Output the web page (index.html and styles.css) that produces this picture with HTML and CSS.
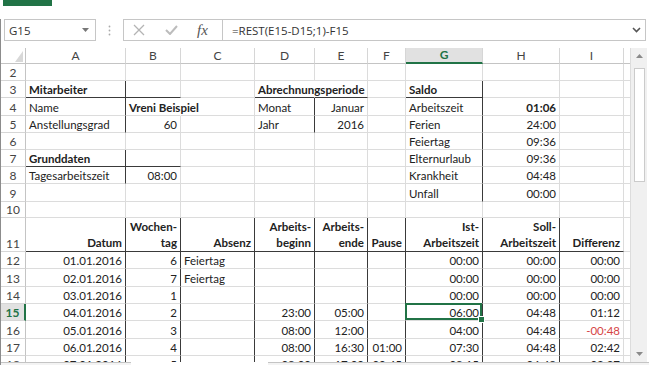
FILE: index.html
```html
<!DOCTYPE html>
<html lang="de">
<head>
  <meta charset="UTF-8">
  <meta name="viewport" content="width=device-width, initial-scale=1.0">
  <title>Arbeitszeit Januar</title>
  <link rel="stylesheet" href="styles.css">
</head>
<body>
  <div class="tab-strip"><span class="file-tab"></span></div>

  <div class="window">
    <!-- formula bar -->
    <div class="formula-bar">
      <div class="name-box">
        <span>G15</span>
        <svg width="7" height="4" viewBox="0 0 7 4"><polygon points="0,0 7,0 3.5,4" fill="#777"/></svg>
      </div>
      <div class="grip">
        <svg width="3" height="11" viewBox="0 0 3 11"><circle cx="1.5" cy="1.5" r="0.9" fill="#aaa"/><circle cx="1.5" cy="5.5" r="0.9" fill="#aaa"/><circle cx="1.5" cy="9.5" r="0.9" fill="#aaa"/></svg>
      </div>
      <div class="fx-buttons">
        <svg class="btn-x" width="12" height="12" viewBox="0 0 12 12"><path d="M1 1 L11 11 M11 1 L1 11" stroke="#b4b4b4" stroke-width="1.3" fill="none"/></svg>
        <svg class="btn-ok" width="13" height="10" viewBox="0 0 13 10"><polyline points="1,5 5,9 12,1" stroke="#bcbcbc" stroke-width="2" fill="none"/></svg>
        <span class="fx">fx</span>
      </div>
      <div class="formula-input">
        <span>=REST(E15-D15;1)-F15</span>
        <svg width="9" height="6" viewBox="0 0 9 6"><polyline points="1,1 4.5,4.5 8,1" stroke="#555" stroke-width="1.6" fill="none"/></svg>
      </div>
    </div>

    <!-- sheet -->
    <div class="sheet-area">
      <div class="grid-wrap">
        <table class="sheet">
          <colgroup>
            <col class="w-rh"><col class="w-a"><col class="w-b"><col class="w-c"><col class="w-d">
            <col class="w-e"><col class="w-f"><col class="w-g"><col class="w-h"><col class="w-i"><col class="w-fill">
          </colgroup>
          <thead>
            <tr class="h16">
              <th class="corner"><svg width="25" height="15" viewBox="0 0 25 15"><polygon points="14,14 22,14 22,3" fill="#d8d8d8"/></svg></th>
              <th>A</th><th>B</th><th>C</th><th>D</th><th>E</th><th>F</th><th class="sel">G</th><th>H</th><th>I</th><th class="fill"></th>
            </tr>
          </thead>
          <tbody>
            <tr class="h17"><th>2</th><td></td><td></td><td></td><td></td><td></td><td></td><td></td><td></td><td></td><td class="fill"></td></tr>
            <tr class="h17"><th>3</th><td class="b bb br">Mitarbeiter</td><td class="bb"></td><td></td><td class="b bb nob">Abrechnungsperiode</td><td class="bb"></td><td></td><td class="b bb br">Saldo</td><td></td><td></td><td class="fill"></td></tr>
            <tr class="h18"><th>4</th><td class="br">Name</td><td class="b nob">Vreni Beispiel</td><td></td><td class="br">Monat</td><td class="n">Januar</td><td></td><td class="br">Arbeitszeit</td><td class="n b">01:06</td><td></td><td class="fill"></td></tr>
            <tr class="h17"><th>5</th><td class="br">Anstellungsgrad</td><td class="n">60</td><td></td><td class="br">Jahr</td><td class="n">2016</td><td></td><td class="br">Ferien</td><td class="n">24:00</td><td></td><td class="fill"></td></tr>
            <tr class="h17"><th>6</th><td></td><td></td><td></td><td></td><td></td><td></td><td class="br">Feiertag</td><td class="n">09:36</td><td></td><td class="fill"></td></tr>
            <tr class="h17"><th>7</th><td class="b bb br">Grunddaten</td><td class="bb"></td><td></td><td></td><td></td><td></td><td class="br">Elternurlaub</td><td class="n">09:36</td><td></td><td class="fill"></td></tr>
            <tr class="h17"><th>8</th><td class="br">Tagesarbeitszeit</td><td class="n">08:00</td><td></td><td></td><td></td><td></td><td class="br">Krankheit</td><td class="n">04:48</td><td></td><td class="fill"></td></tr>
            <tr class="h18"><th>9</th><td></td><td></td><td></td><td></td><td></td><td></td><td class="br">Unfall</td><td class="n">00:00</td><td></td><td class="fill"></td></tr>
            <tr class="h16"><th>10</th><td></td><td></td><td></td><td></td><td></td><td></td><td></td><td></td><td></td><td class="fill"></td></tr>
            <tr class="h34 tbl head">
              <th>11</th>
              <td>Datum</td><td>Wochen-<br>tag</td><td>Absenz</td><td>Arbeits-<br>beginn</td><td>Arbeits-<br>ende</td>
              <td>Pause</td><td>Ist-<br>Arbeitszeit</td><td>Soll-<br>Arbeitszeit</td><td class="last">Differenz</td><td class="fill"></td>
            </tr>
            <tr class="h17 tbl"><th>12</th><td>01.01.2016</td><td>6</td><td class="left">Feiertag</td><td></td><td></td><td></td><td>00:00</td><td>00:00</td><td class="last">00:00</td><td class="fill"></td></tr>
            <tr class="h18 tbl"><th>13</th><td>02.01.2016</td><td>7</td><td class="left">Feiertag</td><td></td><td></td><td></td><td>00:00</td><td>00:00</td><td class="last">00:00</td><td class="fill"></td></tr>
            <tr class="h17 tbl"><th>14</th><td>03.01.2016</td><td>1</td><td></td><td></td><td></td><td></td><td>00:00</td><td>00:00</td><td class="last">00:00</td><td class="fill"></td></tr>
            <tr class="h17 tbl"><th class="sel">15</th><td>04.01.2016</td><td>2</td><td></td><td>23:00</td><td>05:00</td><td></td><td class="active">06:00</td><td>04:48</td><td class="last">01:12</td><td class="fill"></td></tr>
            <tr class="h18 tbl"><th>16</th><td>05.01.2016</td><td>3</td><td></td><td>08:00</td><td>12:00</td><td></td><td>04:00</td><td>04:48</td><td class="last neg">-00:48</td><td class="fill"></td></tr>
            <tr class="h17 tbl"><th>17</th><td>06.01.2016</td><td>4</td><td></td><td>08:00</td><td>16:30</td><td>01:00</td><td>07:30</td><td>04:48</td><td class="last">02:42</td><td class="fill"></td></tr>
            <tr class="h17 tbl"><th>18</th><td>07.01.2016</td><td>5</td><td></td><td>08:00</td><td>17:00</td><td>00:45</td><td>08:15</td><td>04:48</td><td class="last">03:27</td><td class="fill"></td></tr>
          </tbody>
        </table>
      </div>

      <div class="vscroll">
        <div class="arrow"><svg width="7" height="4" viewBox="0 0 7 4"><polygon points="0,4 7,4 3.5,0" fill="#8a8a8a"/></svg></div>
        <div class="thumb"></div>
        <div class="track"></div>
        <div class="arrow"><svg width="7" height="4" viewBox="0 0 7 4"><polygon points="0,0 7,0 3.5,4" fill="#8a8a8a"/></svg></div>
      </div>
    </div>

    <div class="sheet-tabs">
      <span class="seg"></span><span class="gap"></span><span class="seg rest"></span>
    </div>
  </div>
</body>
</html>
```

FILE: styles.css
```css
/* page */
body {
  margin: 0;
  width: 649px;
  height: 365px;
  overflow: hidden;
  background: #ffffff;
  font-family: Lato, "Liberation Sans", sans-serif;
}
.tab-strip {
  height: 6px;
}
.file-tab {
  display: block;
  width: 49px;
  height: 6px;
  margin-left: 3px;
  background: #217346;
}
.window {
  border-left: 1px solid #8c8c8c;
}

/* formula bar */
.formula-bar {
  display: flex;
  height: 22px;
  margin-top: 13px;
  padding: 0 3px 0 3px;
  font-family: "Open Sans", "Liberation Sans", sans-serif;
  font-size: 11.5px;
  color: #333;
}
.name-box {
  width: 92px;
  box-sizing: border-box;
  border: 1px solid #c6c6c6;
  display: flex;
  align-items: center;
  justify-content: space-between;
  padding: 0 6px 0 4px;
}
.grip {
  width: 27px;
  display: flex;
  align-items: center;
  justify-content: center;
}
.fx-buttons {
  width: 99px;
  box-sizing: border-box;
  border: 1px solid #c6c6c6;
  border-right: none;
  display: flex;
  align-items: center;
  padding-left: 9px;
}
.btn-ok {
  margin-left: 20px;
}
.fx {
  margin-left: 19px;
  font-family: "Liberation Serif", serif;
  font-style: italic;
  font-size: 15px;
  color: #555;
}
.formula-input {
  flex: 1;
  border: 1px solid #c6c6c6;
  display: flex;
  align-items: center;
  justify-content: space-between;
  padding: 0 4px 0 9px;
}

/* sheet */
.sheet-area {
  display: flex;
  height: 314px;
  margin-top: 7px;
}
.grid-wrap {
  width: 629px;
  overflow: hidden;
}
.sheet {
  border-spacing: 0;
  table-layout: fixed;
  width: 629px;
  font-size: 11.5px;
  line-height: 14px;
}
.w-rh { width: 25px; }
.w-a { width: 100px; }
.w-b { width: 55px; }
.w-c { width: 74px; }
.w-d { width: 60px; }
.w-e { width: 53px; }
.w-f { width: 38px; }
.w-g { width: 77px; }
.w-h { width: 77px; }
.w-i { width: 64px; }
.w-fill { width: 6px; }

.h16 { height: 16px; }
.h17 { height: 17px; }
.h18 { height: 18px; }
.h34 { height: 34px; }

.sheet th {
  padding: 0;
  font-weight: normal;
  color: #444;
  text-align: center;
  border-right: 1px solid #d6d6d6;
  border-bottom: 1px solid #d6d6d6;
  font-size: 12px;
}
.sheet thead th {
  vertical-align: middle;
  border-bottom-color: #c4c4c4;
}
.sheet thead th.corner {
  border-right-color: #c4c4c4;
}
.corner svg {
  display: block;
}
.sheet thead th.sel {
  background: #e1e1e1;
  color: #217346;
  font-weight: bold;
  border-bottom: 2px solid #217346;
}
.sheet tbody th {
  vertical-align: bottom;
  border-right-color: #c4c4c4;
}
.sheet tbody th.sel {
  background: #e1e1e1;
  color: #217346;
  font-weight: bold;
  border-right: 2px solid #217346;
}
.sheet td {
  padding: 0 3px;
  border-right: 1px solid #dcdcdc;
  border-bottom: 1px solid #dcdcdc;
  white-space: nowrap;
  overflow: visible;
  vertical-align: bottom;
  color: #222;
}
.sheet td.fill,
.sheet th.fill {
  border-right: none;
}
.b { font-weight: bold; }
.n { text-align: right; }
.sheet td.bb { border-bottom-color: #3a3a3a; }
.sheet td.br { border-right-color: #3a3a3a; }
.sheet td.nob { border-right-color: transparent; }

/* time table */
.tbl td {
  text-align: right;
  border-right-color: #3a3a3a;
}
.tbl td.left { text-align: left; }
.tbl td.last,
.tbl td.fill { border-right-color: #dcdcdc; }
.head td {
  font-weight: bold;
  line-height: 16px;
  border-bottom-color: #3a3a3a;
}
.head td.fill { border-bottom-color: #dcdcdc; }
.sheet td.neg { color: #d64545; }

.active {
  position: relative;
}
.active::after {
  content: "";
  position: absolute;
  left: -1px;
  top: -1px;
  right: 0;
  bottom: 0;
  border: 2px solid #217346;
}
.active::before {
  content: "";
  position: absolute;
  right: -3px;
  bottom: -3px;
  width: 5px;
  height: 5px;
  background: #217346;
  border: 1px solid #fff;
  z-index: 1;
}

/* scrollbar */
.vscroll {
  width: 17px;
  display: flex;
  flex-direction: column;
  background: #f0f0f0;
  border-left: 1px solid #dcdcdc;
  box-sizing: border-box;
}
.arrow {
  height: 16px;
  display: flex;
  align-items: center;
  justify-content: center;
}
.thumb {
  height: 112px;
  margin: 4px 2px 0 3px;
  background: #ffffff;
  border: 1px solid #cbcbcb;
}
.track {
  flex: 1;
}

/* sheet tabs strip */
.sheet-tabs {
  display: flex;
  height: 3px;
}
.seg {
  width: 130px;
  border-top: 1px solid #c4c4c4;
  background: #f3f3f3;
}
.gap {
  width: 137px;
}
.seg.rest {
  flex: 1;
}
```
